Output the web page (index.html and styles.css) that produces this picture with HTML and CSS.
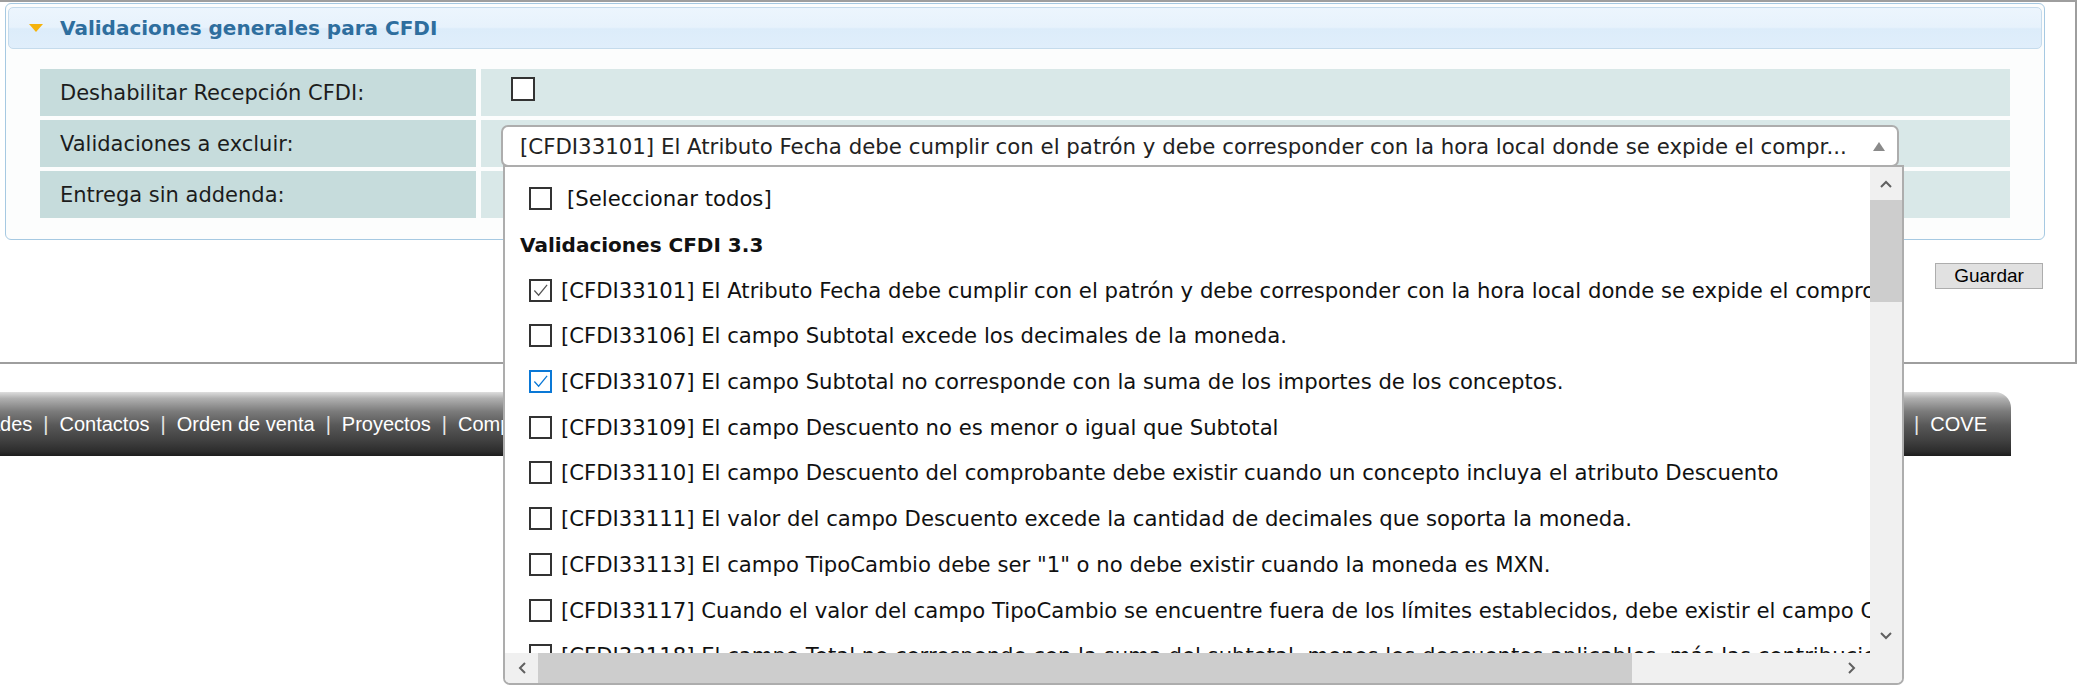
FILE: index.html
```html
<!DOCTYPE html>
<html lang="es">
<head>
  <meta charset="UTF-8" />
  <title>Validaciones generales para CFDI</title>
  <link rel="stylesheet" href="styles.css">
</head>
<body>
  <div class="page">
    <div class="panel">
      <h3 class="panel-header"><span class="arrow"></span>Validaciones generales para CFDI</h3>
      <div class="form-grid">
        <div class="label">Deshabilitar Recepción CFDI:</div>
        <div class="value"><span class="check first"></span></div>

        <div class="label">Validaciones a excluir:</div>
        <div class="value select-cell">
          <div class="multiselect">
            <div class="ms-button">
              <span class="ms-text">[CFDI33101] El Atributo Fecha debe cumplir con el patrón y debe corresponder con la hora local donde se expide el compr...</span>
              <span class="ms-arrow"></span>
            </div>
            <div class="ms-menu">
              <div class="ms-list">
                <div class="ms-row opt all"><span class="check"></span>[Seleccionar todos]</div>
                <div class="ms-row group">Validaciones CFDI 3.3</div>
                <div class="ms-row opt"><span class="check"><svg viewBox="0 0 18 18"><path d="M2.5 9 L7 14 L16 3" /></svg></span>[CFDI33101] El Atributo Fecha debe cumplir con el patrón y debe corresponder con la hora local donde se expide el comprobante.</div>
                <div class="ms-row opt"><span class="check"></span>[CFDI33106] El campo Subtotal excede los decimales de la moneda.</div>
                <div class="ms-row opt"><span class="check focus"><svg viewBox="0 0 18 18"><path d="M2.5 9 L7 14 L16 3" /></svg></span>[CFDI33107] El campo Subtotal no corresponde con la suma de los importes de los conceptos.</div>
                <div class="ms-row opt"><span class="check"></span>[CFDI33109] El campo Descuento no es menor o igual que Subtotal</div>
                <div class="ms-row opt"><span class="check"></span>[CFDI33110] El campo Descuento del comprobante debe existir cuando un concepto incluya el atributo Descuento</div>
                <div class="ms-row opt"><span class="check"></span>[CFDI33111] El valor del campo Descuento excede la cantidad de decimales que soporta la moneda.</div>
                <div class="ms-row opt"><span class="check"></span>[CFDI33113] El campo TipoCambio debe ser "1" o no debe existir cuando la moneda es MXN.</div>
                <div class="ms-row opt"><span class="check"></span>[CFDI33117] Cuando el valor del campo TipoCambio se encuentre fuera de los límites establecidos, debe existir el campo Confirmacion.</div>
                <div class="ms-row opt"><span class="check"></span>[CFDI33118] El campo Total no corresponde con la suma del subtotal, menos los descuentos aplicables, más las contribuciones recibidas.</div>
              </div>
              <div class="vscroll">
                <div class="sb-btn up"><svg viewBox="0 0 12 8"><polyline points="1,7 6,2 11,7" /></svg></div>
                <div class="sb-thumb"></div>
                <div class="sb-fill"></div>
                <div class="sb-btn down"><svg viewBox="0 0 12 8"><polyline points="1,1 6,6 11,1" /></svg></div>
                <div class="sb-corner"></div>
              </div>
              <div class="hscroll">
                <div class="sb-btn left"><svg viewBox="0 0 8 12"><polyline points="7,1 2,6 7,11" /></svg></div>
                <div class="sb-thumb"></div>
                <div class="sb-fill"></div>
                <div class="sb-btn right"><svg viewBox="0 0 8 12"><polyline points="1,1 6,6 1,11" /></svg></div>
              </div>
            </div>
          </div>
        </div>

        <div class="label">Entrega sin addenda:</div>
        <div class="value"></div>
      </div>
    </div>
    <div class="actions"><button class="btn">Guardar</button></div>
  </div>

  <div class="nav">
    <div class="nav-links main">
      <span>Actividades</span><span class="sep">|</span><span>Contactos</span><span class="sep">|</span><span>Orden de venta</span><span class="sep">|</span><span>Proyectos</span><span class="sep">|</span><span>Compras</span>
    </div>
    <div class="nav-links"><span class="sep">|</span><span>COVE</span></div>
  </div>
</body>
</html>
```

FILE: styles.css
```css
* { box-sizing: border-box; }
body { margin: 0; min-height: 686px; background: #fff; font-family: "DejaVu Sans", sans-serif; color: #1a1a1a; }

.page { width: 2077px; height: 364px; border: 2px solid #9e9e9e; border-left: 0; padding: 1px 30px 0 5px; }
.panel { border: 1px solid #a6c9e2; border-radius: 6px; background: #fcfdfd; padding: 3px 2px 21px; }
.panel-header { height: 42px; margin: 0; display: flex; align-items: center; padding-left: 20px; border: 1px solid #c5dbec; border-radius: 5px; background: linear-gradient(#ecf5fd 0%, #e7f2fc 48%, #dcecfa 52%, #e0eefb 100%); color: #2e6e9e; font-size: 20px; font-weight: bold; }
.arrow { width: 0; height: 0; border-left: 7px solid transparent; border-right: 7px solid transparent; border-top: 8px solid #f5b30c; margin-right: 17px; }

.form-grid { margin: 20px 0 0 32px; width: 1970px; display: grid; grid-template-columns: 436px 1fr; grid-auto-rows: 47px; gap: 4px 5px; }
.label { background: #c6dcdc; padding-left: 20px; display: flex; align-items: center; font-size: 21px; color: #1c1c1c; }
.value { background: #d9e8e8; padding-left: 20px; }
.select-cell { padding-top: 5px; }

.check { flex: none; width: 23px; height: 23px; border: 2px solid #333; background: #fff; display: inline-flex; align-items: center; justify-content: center; }
.check svg { width: 17px; height: 17px; fill: none; stroke: #555; stroke-width: 1.3; }
.check.focus { border-color: #0a78d6; }
.check.focus svg { stroke: #0a78d6; }
.check.first { width: 24px; height: 24px; margin: 8px 0 0 10px; }

.multiselect { position: relative; }
.ms-button { display: flex; align-items: center; width: 1398px; height: 42px; border: 2px solid #adadad; border-radius: 7px; background: #fff; padding-left: 17px; font-size: 21.3px; color: #222; }
.ms-text { flex: 1; min-width: 0; overflow: hidden; white-space: nowrap; }
.ms-arrow { width: 0; height: 0; border-left: 6px solid transparent; border-right: 6px solid transparent; border-bottom: 9px solid #8a8a8a; margin: 0 12px 0 18px; }

.ms-menu { position: absolute; top: 40px; left: 2px; width: 1401px; height: 520px; border: 2px solid #adadad; border-radius: 0 0 7px 7px; background: #fff; display: grid; grid-template-columns: minmax(0, 1fr) 32px; grid-template-rows: minmax(0, 1fr) 30px; overflow: hidden; z-index: 5; }
.ms-list { overflow: hidden; padding: 9px 0 0 15px; }
.ms-row { height: 45.7px; display: flex; align-items: center; white-space: nowrap; font-size: 21.2px; color: #111; }
.ms-row.opt { padding-left: 9px; }
.ms-row.opt .check { margin-right: 9px; }
.ms-row.all .check { margin-right: 15px; }
.ms-row.group { font-size: 20px; font-weight: bold; }

.vscroll { grid-row: 1 / 3; grid-column: 2; background: #f0f0f0; display: flex; flex-direction: column; }
.vscroll .sb-btn.up { height: 33px; }
.vscroll .sb-thumb { height: 102px; background: #cdcdcd; }
.vscroll .sb-fill { flex: 1; }
.vscroll .sb-btn.down { height: 34px; }
.sb-corner { height: 30px; }
.hscroll { grid-row: 2; grid-column: 1; background: #f0f0f0; display: flex; }
.hscroll .sb-btn.left { width: 33px; }
.hscroll .sb-thumb { width: 1094px; background: #cdcdcd; }
.hscroll .sb-fill { flex: 1; }
.hscroll .sb-btn.right { width: 36px; }
.sb-btn { display: flex; align-items: center; justify-content: center; }
.sb-btn svg { fill: none; stroke: #606060; stroke-width: 2; }
.sb-btn.up svg, .sb-btn.down svg { width: 12px; height: 8px; }
.sb-btn.left svg, .sb-btn.right svg { width: 8px; height: 12px; }

.actions { display: flex; justify-content: flex-end; margin: 23px 2px 0 0; }
.btn { width: 108px; height: 26px; border: 1px solid #adadad; background: #e1e1e1; font-family: "Liberation Sans", Arial, sans-serif; font-size: 19px; color: #000; padding: 0; line-height: 24px; }

.nav { margin-top: 28px; width: 2011px; height: 64px; border-radius: 0 16px 0 0; background: linear-gradient(#dedede 0%, #b0b0b0 10%, #7c7c7c 30%, #585858 52%, #404040 76%, #2c2c2c 93%, #1c1c1c 100%); display: flex; justify-content: space-between; align-items: center; padding-right: 24px; font-family: "Liberation Sans", Arial, sans-serif; font-size: 20px; color: #fff; white-space: nowrap; overflow: hidden; }
.nav-links.main { width: 573px; margin-left: -70px; overflow: hidden; }
.sep { padding: 0 11px; color: #e6e6e6; }
```
